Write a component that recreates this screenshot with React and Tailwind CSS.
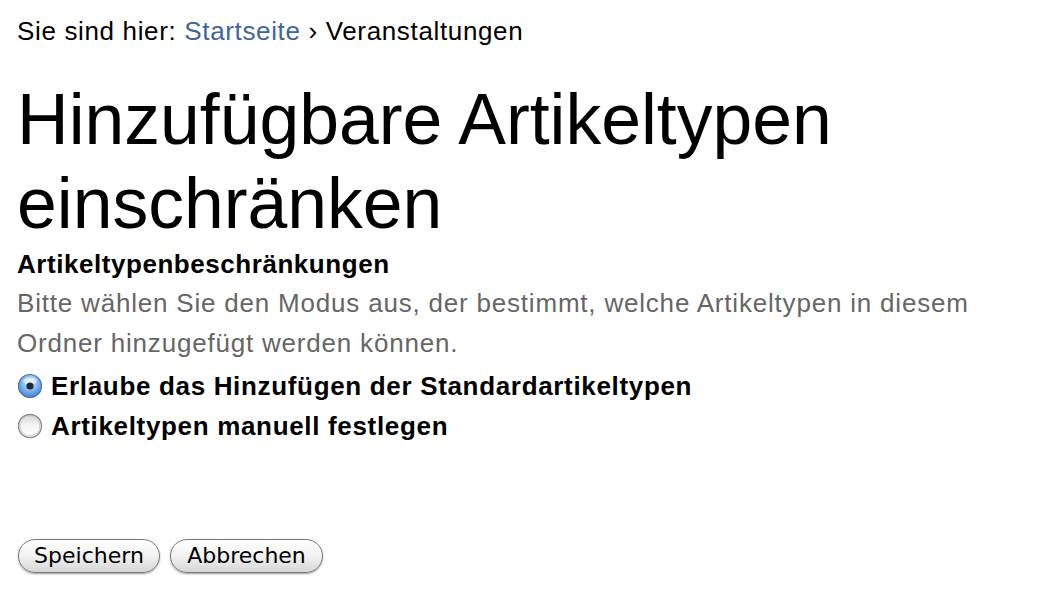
import React from "react";

function Radio({ checked }) {
  return (
    <svg width="26" height="26" viewBox="0 0 26 26" className="shrink-0">
      <defs>
        <radialGradient id="blueFill" cx="50%" cy="35%" r="65%">
          <stop offset="0%" stopColor="#e4f1ff" />
          <stop offset="45%" stopColor="#8fc1f2" />
          <stop offset="100%" stopColor="#3c82d6" />
        </radialGradient>
        <linearGradient id="grayFill" x1="0" y1="0" x2="0" y2="1">
          <stop offset="0%" stopColor="#d8d8d8" />
          <stop offset="50%" stopColor="#f6f6f6" />
          <stop offset="100%" stopColor="#ffffff" />
        </linearGradient>
      </defs>
      {checked ? (
        <>
          <circle cx="13" cy="13" r="11.5" fill="url(#blueFill)" stroke="#4a6f9e" strokeWidth="1.2" />
          <ellipse cx="13" cy="8" rx="7" ry="3.5" fill="#ffffff" opacity="0.55" />
          <circle cx="13" cy="13" r="3.6" fill="#1f2a3a" />
        </>
      ) : (
        <>
          <circle cx="13" cy="13" r="11.5" fill="url(#grayFill)" stroke="#8c8c8c" strokeWidth="1.4" />
          <circle cx="13" cy="13" r="9.8" fill="none" stroke="#cfcfcf" strokeWidth="1" />
        </>
      )}
    </svg>
  );
}

function AquaButton({ children, width }) {
  return (
    <button
      className={`h-[34px] ${width} rounded-full border-[1.5px] border-[#7a7a7a] bg-gradient-to-b from-[#ffffff] via-[#f2f2f2] to-[#d6d6d6] shadow-[0_1px_2px_rgba(0,0,0,0.4),inset_0_1px_0_#fff] text-[22px] text-black leading-none flex items-center justify-center`}
      style={{ fontFamily: '"DejaVu Sans", sans-serif' }}
    >
      {children}
    </button>
  );
}

export default function App() {
  return (
    <div
      className="bg-white w-[1055px] h-[608px] overflow-hidden px-[17px] pt-[11px] text-black"
      style={{ fontFamily: '"Liberation Sans", Arial, sans-serif' }}
    >
      <div className="text-[26px] leading-[40px] tracking-[0.65px]">
        Sie sind hier: <span className="text-[#41659b]">Startseite</span> › Veranstaltungen
      </div>
      <h1 className="mt-[26px] text-[71.5px] leading-[84px] font-normal">
        Hinzufügbare Artikeltypen einschränken
      </h1>
      <div className="text-[26px] leading-[38px] font-bold tracking-[0.55px]">
        Artikeltypenbeschränkungen
      </div>
      <p className="text-[26px] leading-[40px] text-[#666666] tracking-[0.8px] w-[1010px]">
        Bitte wählen Sie den Modus aus, der bestimmt, welche Artikeltypen in diesem Ordner hinzugefügt werden können.
      </p>
      <div className="mt-[3px] flex flex-col">
        <label className="flex items-center gap-[8px] h-[40px] text-[26px] font-bold tracking-[0.67px]">
          <Radio checked />
          <span>Erlaube das Hinzufügen der Standardartikeltypen</span>
        </label>
        <label className="flex items-center gap-[8px] h-[40px] text-[26px] font-bold tracking-[0.67px]">
          <Radio />
          <span>Artikeltypen manuell festlegen</span>
        </label>
      </div>
      <div className="mt-[93px] flex gap-[10px] ml-[1px]">
        <AquaButton width="w-[142px]">Speichern</AquaButton>
        <AquaButton width="w-[153px]">Abbrechen</AquaButton>
      </div>
    </div>
  );
}
